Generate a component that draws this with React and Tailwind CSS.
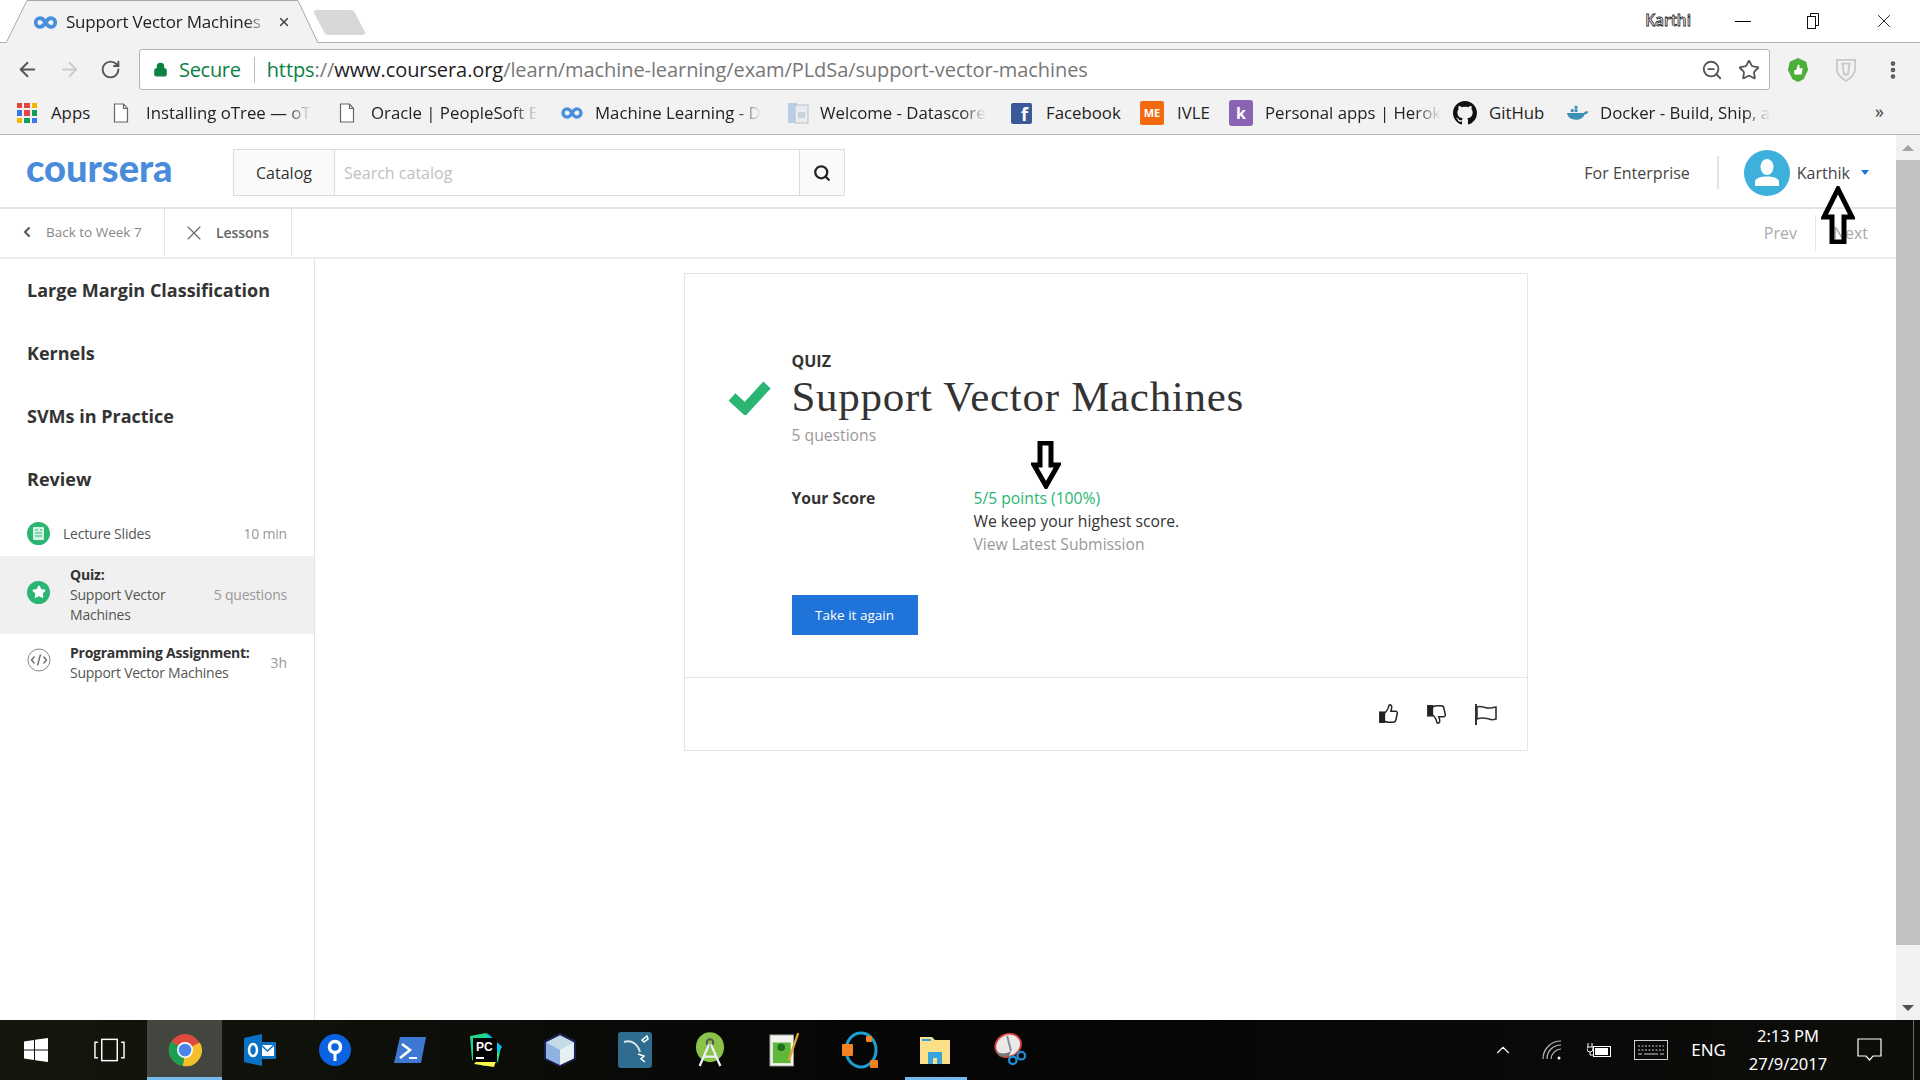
import {
  ArrowLeft,
  ArrowRight,
  RotateCw,
  Lock,
  Star,
  X,
  Search,
  ZoomOut,
  ChevronLeft,
  ChevronUp,
  EllipsisVertical,
} from "lucide-react";

const CHROME = { fontFamily: '"Open Sans", "Noto Sans", sans-serif' };
const PAGE = { fontFamily: '"Open Sans", sans-serif' };

// small coursera infinity mark, used in tab and bookmark bar
const CoLoop = ({ className }) => (
  <svg viewBox="0 0 24 14" className={className} fill="none" stroke="#4a8fdc" strokeWidth="4">
    <path d="M12 7C10 3.500 8.500 2.200 6.300 2.200a4.800 4.800 0 0 0 0 9.600c2.200 0 3.700-1.300 5.700-4.800s3.500-4.800 5.700-4.800a4.800 4.800 0 0 1 0 9.600c-2.200 0-3.700-1.300-5.700-4.800z" />
  </svg>
);

const DocIcon = () => (
  <svg viewBox="0 0 16 20" className="w-4 h-5 shrink-0" fill="#fff" stroke="#666" strokeWidth="1.200">
    <path d="M1.500 1h9l4 4.500V19h-13z" />
    <path d="M10.500 1v4.500h4" fill="none" />
  </svg>
);

const AppsIcon = () => (
  <div className="grid grid-cols-3 gap-[2px] w-5 h-5 shrink-0">
    {["#e8453c", "#e8453c", "#f4b400", "#3b78e7", "#e8453c", "#0f9d58", "#f4b400", "#0f9d58", "#3b78e7"].map((c, i) => (
      <span key={i} style={{ backgroundColor: c }} />
    ))}
  </div>
);

const Bookmark = ({ icon, text, width, gap = "gap-4", fade }) => (
  <div className={`flex items-center ${gap} shrink-0`} style={{ width }}>
    {icon}
    <span
      className={`whitespace-nowrap text-[16.800px] text-[#222] ${
        fade ? "[mask-image:linear-gradient(to_right,black_85%,transparent)]" : ""
      }`}
    >
      {text}
    </span>
  </div>
);

const Bookmarks = () => (
  <div className="h-[44px] pt-[1px] bg-[#f2f2f2] border-b border-[#b5b5b5] flex items-center pl-[17px] relative" style={CHROME}>
    <Bookmark width={96} gap="gap-[14px]" icon={<AppsIcon />} text="Apps" />
    <Bookmark width={226} gap="gap-[17px]" fade icon={<DocIcon />} text="Installing oTree — oT" />
    <Bookmark width={222} gap="gap-[16px]" fade icon={<DocIcon />} text="Oracle | PeopleSoft E" />
    <Bookmark width={226} gap="gap-[12px]" fade icon={<CoLoop className="w-[22px] h-[12px] shrink-0" />} text="Machine Learning - D" />
    <Bookmark
      width={224}
      gap="gap-[11px]"
      fade
      icon={
        <svg viewBox="0 0 22 22" className="w-[22px] h-[22px] shrink-0">
          <rect x="1" y="1" width="9" height="20" fill="#b9cfe6" />
          <rect x="8" y="3" width="13" height="18" fill="#e9edf2" stroke="#b5bfca" />
          <rect x="11" y="10" width="7" height="6" fill="#c7d3df" />
        </svg>
      }
      text="Welcome - Datascore"
    />
    <Bookmark
      width={129}
      gap="gap-[14px]"
      icon={
        <span className="w-[21px] h-[21px] bg-[#3b5998] rounded-[2px] text-white font-bold text-[18px] leading-[23px] text-right pr-[4px] shrink-0">
          f
        </span>
      }
      text="Facebook"
    />
    <Bookmark
      width={89}
      gap="gap-[13px]"
      icon={
        <span className="w-[24px] h-[24px] bg-[#f26a0f] rounded-[2px] text-white font-bold text-[11px] leading-[24px] text-center shrink-0">
          ME
        </span>
      }
      text="IVLE"
    />
    <Bookmark
      width={224}
      gap="gap-[12px]"
      fade
      icon={
        <span className="w-[24px] h-[26px] bg-[#8a63b3] rounded-[3px] text-white font-bold text-[16px] leading-[26px] text-center shrink-0">
          k
        </span>
      }
      text="Personal apps | Herok"
    />
    <Bookmark
      width={113}
      gap="gap-[12px]"
      icon={
        <svg viewBox="0 0 16 16" className="w-6 h-6 shrink-0" fill="#111">
          <path d="M8 0C3.580 0 0 3.580 0 8c0 3.540 2.290 6.530 5.470 7.590.4.070.55-.17.55-.38 0-.19-.01-.82-.01-1.490-2.010.37-2.530-.49-2.690-.94-.09-.23-.48-.94-.82-1.130-.28-.15-.68-.52-.01-.53.630-.01 1.080.58 1.230.82.72 1.210 1.870.87 2.330.66.070-.52.28-.87.51-1.070-1.780-.2-3.640-.89-3.640-3.950 0-.87.31-1.590.82-2.150-.08-.2-.36-1.020.08-2.120 0 0 .67-.21 2.200.82.64-.18 1.320-.27 2-.27s1.360.09 2 .27c1.530-1.040 2.200-.82 2.200-.82.44 1.100.16 1.920.08 2.120.51.56.82 1.270.82 2.150 0 3.070-1.870 3.750-3.650 3.950.29.25.54.73.54 1.480 0 1.070-.01 1.930-.01 2.200 0 .21.15.46.55.38A8.010 8.010 0 0 0 16 8c0-4.420-3.580-8-8-8z" />
        </svg>
      }
      text="GitHub"
    />
    <Bookmark
      width={216}
      gap="gap-[11px]"
      fade
      icon={
        <svg viewBox="0 0 24 16" className="w-[23px] h-[16px] shrink-0">
          <path d="M1 8h17c1 0 2-1 2.500-2 1 .5 2 .5 3 .5-1 2-2.500 3-4 3-1.500 3.500-5 5.500-9 5.500-5 0-8.500-2-9.500-7z" fill="#3d8fb5" />
          <rect x="5" y="4" width="3" height="3" fill="#3d8fb5" />
          <rect x="9" y="4" width="3" height="3" fill="#3d8fb5" />
          <rect x="9" y="0.500" width="3" height="3" fill="#3d8fb5" />
        </svg>
      }
      text="Docker - Build, Ship, a"
    />
    <span className="absolute left-[1875px] top-[7px] text-[18px] text-[#444]">»</span>
  </div>
);

const TitleBar = () => (
  <div className="h-[43px] bg-white border-b border-[#b0b0b0] relative" style={CHROME}>
    {/* tab shape */}
    <svg className="absolute left-0 top-0 w-[370px] h-[43px]" viewBox="0 0 370 43">
      <path d="M6 43 L27 0.500 H298 L318 43" fill="#f2f2f2" stroke="#a8a8a8" />
      <path d="M7 42.500 H317" stroke="#f2f2f2" strokeWidth="2" />
      <path d="M317 10 H350 Q354 10 355 13 L365 32 Q366 35 362 35 H328 Q325 35 324 32 L314 13 Q313 10 317 10z" fill="#d8d8d8" />
    </svg>
    <div className="absolute left-[34px] top-[10px] w-[280px] flex items-center h-[24px]">
      <CoLoop className="w-[23px] h-[13px] shrink-0" />
      <span className="ml-[9px] w-[203px] whitespace-nowrap text-[17px] tracking-[-0.2px] text-[#222] [mask-image:linear-gradient(to_right,black_88%,transparent)]">
        Support Vector Machines
      </span>
      <X className="ml-[8px] w-[14px] h-[14px] text-[#444]" strokeWidth={2.500} />
    </div>
    <div className="absolute right-0 top-0 h-[42px] flex items-center">
      <span className="text-[15.500px] font-semibold text-white [-webkit-text-stroke:0.8px_#222] mr-[44px]">Karthi</span>
      <div className="w-[16px] h-px bg-black mr-[54px]" />
      <svg viewBox="0 0 16 16" className="w-[16px] h-[16px] mr-[52px]" fill="none" stroke="#111">
        <rect x="2.500" y="3.500" width="8" height="12" />
        <path d="M5.500 3.500V0.500h8v12h-3" />
      </svg>
      <X className="w-[22px] h-[22px] text-[#111] mr-[25px]" strokeWidth={1} />
    </div>
  </div>
);

const Toolbar = () => (
  <div className="h-[48px] pt-[5px] bg-[#f2f2f2] flex items-center" style={CHROME}>
    <div className="w-[139px] flex items-center pl-[16px] gap-[19px] shrink-0">
      <ArrowLeft className="w-[23px] h-[23px] text-[#555]" />
      <ArrowRight className="w-[23px] h-[23px] text-[#ccc]" />
      <RotateCw className="w-[21px] h-[21px] text-[#555]" strokeWidth={2.200} />
    </div>
    <div className="w-[1631px] h-[41px] bg-white border border-[#b5b5b5] rounded-[3px] flex items-center pl-[13px]">
      <Lock className="w-[15px] h-[17px] text-[#0b8043] shrink-0" fill="#0b8043" />
      <span className="ml-[11px] text-[20px] text-[#0b8043] tracking-[-0.3px]">Secure</span>
      <div className="w-px h-[26px] bg-[#bbb] ml-[13px]" />
      <span className="ml-[12px] text-[20px] tracking-[-0.08px] whitespace-nowrap text-[#777]">
        <span className="text-[#0b8043]">https</span>
        <span>://</span>
        <span className="text-[#222]">www.coursera.org</span>
        /learn/machine-learning/exam/PLdSa/support-vector-machines
      </span>
      <ZoomOut className="ml-auto w-[22px] h-[22px] text-[#555]" />
      <Star className="ml-[15px] mr-[9px] w-[22px] h-[22px] text-[#555]" />
    </div>
    <svg viewBox="0 0 24 28" className="ml-[17px] w-[22px] h-[26px]">
      <path d="M12 1l9 4 2 9-5 10-6 3-6-3-5-10 2-9z" fill="#4caf3c" />
      <path d="M8 14h2l2-6c2 0 2 2 1.500 4H17l-1 7H8z" fill="#fff" />
    </svg>
    <svg viewBox="0 0 24 28" className="ml-[26px] w-[22px] h-[26px]" fill="none" stroke="#c8c8c8" strokeWidth="2">
      <path d="M2 3h20v10c0 6-5 10-10 13C7 23 2 19 2 13z" />
      <path d="M8 7h8l-2 12h-4z" />
    </svg>
    <EllipsisVertical className="ml-[25px] w-[22px] h-[26px] text-[#555]" strokeWidth={3} />
  </div>
);

const CourseraHeader = () => (
  <div className="h-[74px] pt-[3px] bg-white border-b-2 border-[#e3e3e3] flex items-center shrink-0" style={PAGE}>
    <div className="w-[233px] pl-[26px] shrink-0">
      <span
        className="text-[38px] leading-none font-black text-[#4a8bdc] relative top-[-5px]"
        style={{ fontFamily: '"Lato", sans-serif' }}
      >
        coursera
      </span>
    </div>
    <div className="flex h-[47px] w-[612px] border border-[#dcdcdc] text-[16px]">
      <div className="w-[101px] bg-[#fafafa] border-r border-[#dcdcdc] flex items-center justify-center text-[#333]">
        Catalog
      </div>
      <div className="flex-1 flex items-center pl-[9px] text-[#bfbfbf]">Search catalog</div>
      <div className="w-[45px] bg-[#fafafa] border-l border-[#dcdcdc] flex items-center justify-center">
        <Search className="w-[18px] h-[18px] text-[#222]" strokeWidth={3} />
      </div>
    </div>
    <div className="ml-auto flex items-center text-[16px] text-[#444]">
      <span>For Enterprise</span>
      <div className="w-[2px] h-[33px] bg-[#e3e3e3] ml-[27px]" />
      <svg viewBox="0 0 46 46" className="ml-[25px] w-[46px] h-[46px]">
        <circle cx="23" cy="23" r="23" fill="#3db0dc" />
        <ellipse cx="23" cy="17" rx="6.500" ry="8" fill="#fff" />
        <path d="M11 36v-4c0-4 6-5.500 12-5.500S35 28 35 32v4z" fill="#fff" />
      </svg>
      <span className="ml-[7px]">Karthik</span>
      <span className="ml-[11px] mr-[27px] w-0 h-0 border-x-[4px] border-x-transparent border-t-[5px] border-t-[#2073d8]" />
    </div>
  </div>
);

const SubHeader = () => (
  <div className="h-[50px] pb-[1px] bg-white border-b-2 border-[#eaeaea] flex items-stretch shrink-0" style={PAGE}>
    <div className="w-[165px] border-r border-[#e5e5e5] flex items-center pl-[19px] text-[13.500px] text-[#888]">
      <ChevronLeft className="w-[16px] h-[16px] text-[#555] relative top-[-1px]" strokeWidth={3} />
      <span className="ml-[11px]">Back to Week 7</span>
    </div>
    <div className="w-[127px] border-r border-[#e5e5e5] flex items-center pl-[17px] text-[14px] font-semibold text-[#666]">
      <X className="w-[24px] h-[24px] text-[#666]" strokeWidth={1.100} />
      <span className="ml-[10px] tracking-[-0.1px]">Lessons</span>
    </div>
    <div className="ml-auto flex items-center text-[16px] text-[#aaa]">
      <span>Prev</span>
      <div className="w-px h-[36px] bg-[#e5e5e5] ml-[18px]" />
      <span className="ml-[17px] mr-[28px]">Next</span>
    </div>
  </div>
);

const Section = ({ title }) => (
  <div className="h-[63px] flex items-center pl-[27px] text-[18px] font-bold text-[#333]">{title}</div>
);

const Sidebar = () => (
  <div className="w-[315px] shrink-0 border-r border-[#e3e3e3]" style={PAGE}>
    <div>
      <Section title="Large Margin Classification" />
      <Section title="Kernels" />
      <Section title="SVMs in Practice" />
      <Section title="Review" />
    </div>
    <div className="h-[45px] flex items-center pl-[27px] pr-[27px] text-[14px]">
      <span className="w-[23px] h-[23px] rounded-full bg-[#2ab573] flex items-center justify-center shrink-0">
        <svg viewBox="0 0 11 13" className="w-[11px] h-[13px]">
          <rect width="11" height="13" rx="1" fill="#d6f2e3" />
          <path d="M2 3h3M7 3h2M2 6h7M2 9h7" stroke="#2ab573" strokeWidth="1" />
        </svg>
      </span>
      <span className="ml-[13px] text-[#555] tracking-[-0.2px]">Lecture Slides</span>
      <span className="ml-auto text-[#999] tracking-[-0.2px]">10 min</span>
    </div>
    <div className="h-[78px] bg-[#f0f0f0] flex items-center pl-[27px] pr-[27px] text-[14px] leading-[20px]">
      <span className="w-[23px] h-[23px] rounded-full bg-[#2ab573] flex items-center justify-center shrink-0 relative top-[-3px]">
        <Star className="w-[14px] h-[14px] text-white" fill="#fff" />
      </span>
      <div className="ml-[20px] w-[110px] text-[#555] tracking-[-0.2px]">
        <div className="font-bold text-[#333]">Quiz:</div>
        Support Vector Machines
      </div>
      <span className="ml-auto text-[#999] tracking-[-0.2px]">5 questions</span>
    </div>
    <div className="h-[58px] flex items-center pl-[27px] pr-[27px] text-[14px] leading-[20px]">
      <svg viewBox="0 0 24 24" className="w-[24px] h-[24px] shrink-0 relative top-[-3px]" fill="none" stroke="#666" strokeWidth="1.300">
        <circle cx="12" cy="12" r="11" stroke="#888" strokeWidth="1" />
        <path d="M7.500 8.500 4.500 12l3 3.500M16.500 8.500l3 3.500-3 3.500M13.500 6.500l-3 11" />
      </svg>
      <div className="ml-[19px] text-[#555] tracking-[-0.25px]">
        <div className="font-bold text-[#333]">Programming Assignment:</div>
        Support Vector Machines
      </div>
      <span className="ml-auto text-[#999]">3h</span>
    </div>
  </div>
);

// thumb with the filled cuff the site uses, flipped for thumbs down
const Thumb = ({ className }) => (
  <svg viewBox="0 0 24 24" className={className} fill="none" stroke="#222" strokeWidth="1.600">
    <rect x="2" y="10" width="5" height="11" fill="#222" />
    <path d="M7 11c2-1 3-3 4-5 .5-1.500.5-3 1.500-4 1.500-.5 2.500 1 2.500 2.500 0 1.500-.5 3-1 4.500h5c1.500 0 2.500 1 2 2.500l-1.500 7c-.3 1.500-1.500 2.500-3 2.500H11c-1.500 0-2.500-1-4-1" />
  </svg>
);

const QuizCard = () => (
  <div className="w-[844px] h-[478px] mt-[14px] border border-[#e5e5e5] relative flex flex-col" style={PAGE}>
    <div className="h-[404px] pl-[107px] pt-[77px] border-b border-[#e5e5e5] relative">
      <svg viewBox="0 0 44 36" className="absolute left-[43px] top-[105px] w-[44px] h-[36px]">
        <path d="M4 18l13 12L39 6" fill="none" stroke="#2ab573" strokeWidth="10" />
      </svg>
      <div className="text-[16px] font-bold text-[#333] leading-[20px]">QUIZ</div>
      <div
        className="text-[43px] leading-[50px] text-[#333] tracking-[0.7px] mt-[1px]"
        style={{ fontFamily: '"Liberation Serif", serif' }}
      >
        Support Vector Machines
      </div>
      <div className="text-[15.700px] text-[#999] leading-[24px] mt-[1px]">5 questions</div>
      <div className="flex mt-[40px] text-[15.700px] leading-[23px]">
        <div className="w-[182px] font-bold text-[#333]">Your Score</div>
        <div>
          <div className="text-[#2ab573]">5/5 points (100%)</div>
          <div className="text-[#333]">We keep your highest score.</div>
          <div className="text-[#999]">View Latest Submission</div>
        </div>
      </div>
      <button className="mt-[39px] w-[126px] h-[40px] bg-[#2073d8] text-white text-[13.500px]">Take it again</button>
    </div>
    <div className="flex-1 flex items-center justify-end pr-[29px] gap-[26px]">
      <Thumb className="w-[22px] h-[22px]" />
      <Thumb className="w-[22px] h-[22px] -scale-y-100" />
      <svg viewBox="0 0 24 24" className="w-[24px] h-[24px]" fill="none" stroke="#333" strokeWidth="1.600">
        <path d="M2 2v21" strokeWidth="2" />
        <path d="M3 5c5-2 8 2 12 1 3 0 5-1 7-1v12c-3 1-5 1-7 0-4-1-7-2-12 0z" />
      </svg>
    </div>
  </div>
);

const Scrollbar = () => (
  <div className="w-[24px] bg-[#f1f1f1] shrink-0 flex flex-col items-center">
    <div className="h-[25px] flex items-center justify-center">
      <span className="w-0 h-0 border-x-[6px] border-x-transparent border-b-[6px] border-b-[#a3a3a3]" />
    </div>
    <div className="w-full h-[785px] bg-[#c1c1c1]" />
    <div className="mt-auto h-[25px] flex items-center justify-center">
      <span className="w-0 h-0 border-x-[6px] border-x-transparent border-t-[6px] border-t-[#505050]" />
    </div>
  </div>
);

// hand drawn arrows sitting over the page
const DownArrow = () => (
  <svg viewBox="0 0 30 48" className="absolute left-[1031px] top-[441px] w-[30px] h-[48px] pointer-events-none" fill="none" stroke="#000" strokeWidth="5">
    <path d="M9 2h11v22h7L15 45 3 24h6z" />
  </svg>
);

const UpArrow = () => (
  <svg viewBox="0 0 34 58" className="absolute left-[1821px] top-[186px] w-[34px] h-[58px] pointer-events-none" fill="none" stroke="#000" strokeWidth="5">
    <path d="M17 3 31 31h-8v25H11V31H3z" />
  </svg>
);

const Tile = ({ children, active, running, narrow }) => (
  <div
    className={`${narrow ? "w-[73.500px]" : "w-[75px]"} h-full shrink-0 flex items-center justify-center relative ${
      active ? "bg-[#43463f]" : ""
    }`}
  >
    {children}
    {active && <div className="absolute left-0 right-0 bottom-0 h-[3px] bg-[#76b9ed]" />}
    {running && <div className="absolute left-[8px] right-[5px] bottom-0 h-[3px] bg-[#76b9ed]" />}
  </div>
);

const TaskIcon = ({ children, vb = "0 0 32 32", className = "w-[32px] h-[32px]" }) => (
  <svg viewBox={vb} className={className}>
    {children}
  </svg>
);

const Taskbar = () => (
  <div
    className="h-[60px] shrink-0 flex items-center bg-gradient-to-r from-[#14170d] via-[#050505] to-[#0d0d0a] text-white"
    style={{ fontFamily: '"Noto Sans", sans-serif' }}
  >
    <Tile narrow>
      <svg viewBox="0 0 24 24" className="w-[24px] h-[24px] relative left-[-1px]" fill="#fff">
        <path d="M0 3.500 10 2v9.500H0zM11 1.800 24 0v11.500H11zM0 12.500h10V22L0 20.500zM11 12.500h13V24l-13-1.800z" />
      </svg>
    </Tile>
    <Tile narrow>
      <svg viewBox="0 0 32 24" className="w-[31px] h-[24px] relative left-[-1px]" fill="none" stroke="#fff" strokeWidth="1.500">
        <rect x="8" y="1" width="16" height="22" />
        <path d="M4 4H1v16h3M28 4h3v16h-3" />
      </svg>
    </Tile>
    <Tile active>
      <TaskIcon className="w-[34px] h-[34px]">
        <circle cx="16" cy="16" r="15" fill="#dd4b3e" />
        <path d="M16 16 30 9a15 15 0 0 1-16 22z" fill="#f6c02d" />
        <path d="M16 16 14 31A15 15 0 0 1 3 8z" fill="#1e9e50" />
        <circle cx="16" cy="16" r="7.500" fill="#fff" />
        <circle cx="16" cy="16" r="6" fill="#4c85ea" />
      </TaskIcon>
    </Tile>
    <Tile>
      <TaskIcon>
        <rect x="14" y="8" width="18" height="17" fill="#0f72c4" />
        <path d="M17 11h13v11H17z" fill="#fff" />
        <path d="M17 11l6.500 6 6.500-6" fill="none" stroke="#0f72c4" strokeWidth="1.500" />
        <path d="M0 4 18 0v32L0 28z" fill="#0a72c6" />
        <ellipse cx="9" cy="16" rx="4" ry="6" fill="none" stroke="#fff" strokeWidth="2.500" />
      </TaskIcon>
    </Tile>
    <Tile>
      <TaskIcon>
        <circle cx="16" cy="16" r="16" fill="#0a62e0" />
        <circle cx="16" cy="13" r="5.500" fill="none" stroke="#fff" strokeWidth="3.500" />
        <rect x="14.500" y="17" width="3" height="10" fill="#fff" />
      </TaskIcon>
    </Tile>
    <Tile>
      <TaskIcon>
        <path d="M6 3h26l-5 26H0z" fill="#3f78d3" />
        <path d="M8 10l8 6-10 8" fill="none" stroke="#fff" strokeWidth="2.600" />
        <path d="M15 24h8" stroke="#fff" strokeWidth="2" />
      </TaskIcon>
    </Tile>
    <Tile>
      <TaskIcon vb="0 0 36 36" className="w-[36px] h-[36px]">
        <path d="M3 4l16-3 5 6 10 7-3 16-14 4-12-6z" fill="#21d789" />
        <path d="M20 1l9 8 6 6-4 6-10-6z" fill="#07c3f2" />
        <path d="M7 32l20 3 4-13-15 0z" fill="#fcf84a" />
        <rect x="6" y="6" width="24" height="24" fill="#000" />
        <text x="9" y="19" fill="#fff" fontSize="12" fontWeight="700" fontFamily="Liberation Sans, sans-serif">PC</text>
        <rect x="9" y="25" width="8" height="2" fill="#fff" />
      </TaskIcon>
    </Tile>
    <Tile>
      <TaskIcon className="w-[34px] h-[34px]">
        <path d="M16 1 30 8v16l-14 7-14-7V8z" fill="#c6dbe8" stroke="#1b1e55" strokeWidth="2" />
        <path d="M3 9l13 7v14L3 24z" fill="#8fb2e0" />
        <path d="M16 16 29 9v15l-13 6z" fill="#e6f1f4" />
      </TaskIcon>
    </Tile>
    <Tile>
      <svg viewBox="0 0 34 36" className="w-[34px] h-[36px]">
        <rect width="34" height="36" rx="3" fill="#2f6c8f" />
        <path d="M6 10c8-3 14 3 16 10" fill="none" stroke="#d8e6ec" strokeWidth="2" />
        <path d="M24 8l5-4 1 3-4 3zM20 22l6 2-3 3 4 3" fill="none" stroke="#fff" strokeWidth="1.500" />
      </svg>
    </Tile>
    <Tile>
      <svg viewBox="0 0 32 38" className="w-[30px] h-[36px]">
        <ellipse cx="16" cy="16" rx="15" ry="16" fill="#8bc34a" />
        <circle cx="16" cy="11" r="3.500" fill="none" stroke="#555" strokeWidth="2" />
        <path d="M15 13 5 36M17 13l10 23M9 26h14" fill="none" stroke="#eef" strokeWidth="2.500" />
      </svg>
    </Tile>
    <Tile>
      <svg viewBox="0 0 34 38" className="w-[32px] h-[36px]">
        <rect x="1" y="3" width="25" height="33" fill="#f4f4ee" stroke="#999" />
        <rect x="4" y="11" width="19" height="22" fill="#5fb83c" />
        <circle cx="13" cy="16" r="4" fill="#1d6f1d" />
        <path d="M31 1 21 30" stroke="#e0a72b" strokeWidth="2.500" />
      </svg>
    </Tile>
    <Tile>
      <svg viewBox="0 0 36 38" className="w-[36px] h-[38px]">
        <ellipse cx="19" cy="19" rx="15" ry="17" fill="none" stroke="#1f9ed1" strokeWidth="3" />
        <rect x="0" y="13" width="11" height="12" rx="1" fill="#f58220" />
        <rect x="24" y="5" width="6" height="6" rx="1" fill="#f58220" />
        <rect x="28" y="29" width="8" height="8" rx="1" fill="#f58220" />
      </svg>
    </Tile>
    <Tile running>
      <svg viewBox="0 0 32 32" className="w-[32px] h-[32px]">
        <path d="M1 3h12l3 3h15v24H1z" fill="#fbe08a" />
        <rect x="3" y="5" width="9" height="2" fill="#3aa0d8" />
        <path d="M9 30V18h14v12h-5v-6h-4v6z" fill="#38a6dc" />
      </svg>
    </Tile>
    <Tile>
      <svg viewBox="0 0 34 38" className="w-[32px] h-[36px]">
        <ellipse cx="15" cy="14" rx="14" ry="12" fill="#e9e9e9" stroke="#d23a3a" strokeWidth="2" transform="rotate(-25 15 14)" />
        <path d="M2 20c6 4 12 3 16 0l-2 6H6z" fill="#777" />
        <path d="M14 4l4 16" stroke="#888" strokeWidth="2" />
        <circle cx="20" cy="30" r="4" fill="none" stroke="#1a8fd8" strokeWidth="2.500" />
        <circle cx="29" cy="25" r="4" fill="none" stroke="#1a8fd8" strokeWidth="2.500" />
      </svg>
    </Tile>
    <div className="ml-auto flex items-center h-full">
      <ChevronUp className="w-[22px] h-[22px] text-white" strokeWidth={1.200} />
      <svg viewBox="0 0 20 20" className="ml-[28px] w-[20px] h-[20px]" fill="none" stroke="#bbb" strokeWidth="1.200">
        <path d="M1 19C1 9 9 1 19 1M5 19c0-8 6-14 14-14M9 19c0-5 5-10 10-10" />
        <circle cx="17" cy="18" r="1.500" fill="#fff" stroke="none" />
      </svg>
      <svg viewBox="0 0 26 16" className="ml-[25px] w-[26px] h-[16px]" fill="none" stroke="#fff">
        <path d="M1 1v4M5 1v4M0 5h6v2a3 3 0 0 1-6 0zM3 10v3h3" />
        <rect x="6.500" y="4.500" width="17" height="10" />
        <rect x="8" y="6" width="13" height="7" fill="#fff" stroke="none" />
      </svg>
      <svg viewBox="0 0 34 20" className="ml-[21px] w-[34px] h-[20px]" fill="none" stroke="#fff" strokeWidth="0.800">
        <rect x="0.500" y="0.500" width="33" height="19" />
        <path d="M4 6h26M4 10h26" strokeDasharray="2 1.500" />
        <path d="M4 14h4M10 14h14M26 14h4" />
      </svg>
      <span className="ml-[23px] text-[17px]">ENG</span>
      <div className="ml-[19px] w-[86px] text-center text-[16.500px] leading-[28px]">
        <div>2:13 PM</div>
        <div>27/9/2017</div>
      </div>
      <svg viewBox="0 0 26 24" className="ml-[26px] w-[26px] h-[24px]" fill="none" stroke="#fff" strokeWidth="1.200">
        <path d="M1 1h23v17h-8l-3.500 4-3.500-4H1z" />
      </svg>
      <div className="ml-[30px] w-px h-full bg-[#666] mr-[6px]" />
    </div>
  </div>
);

const App = () => {
  return (
    <div className="w-[1920px] h-[1080px] overflow-hidden flex flex-col relative bg-white">
      <TitleBar />
      <Toolbar />
      <Bookmarks />
      <div className="flex-1 flex min-h-0">
        <div className="flex-1 flex flex-col min-w-0">
          <CourseraHeader />
          <SubHeader />
          <div className="flex-1 flex min-h-0">
            <Sidebar />
            <div className="flex-1 flex justify-center">
              <QuizCard />
            </div>
          </div>
        </div>
        <Scrollbar />
      </div>
      <Taskbar />
      <DownArrow />
      <UpArrow />
    </div>
  );
};

export default App;
